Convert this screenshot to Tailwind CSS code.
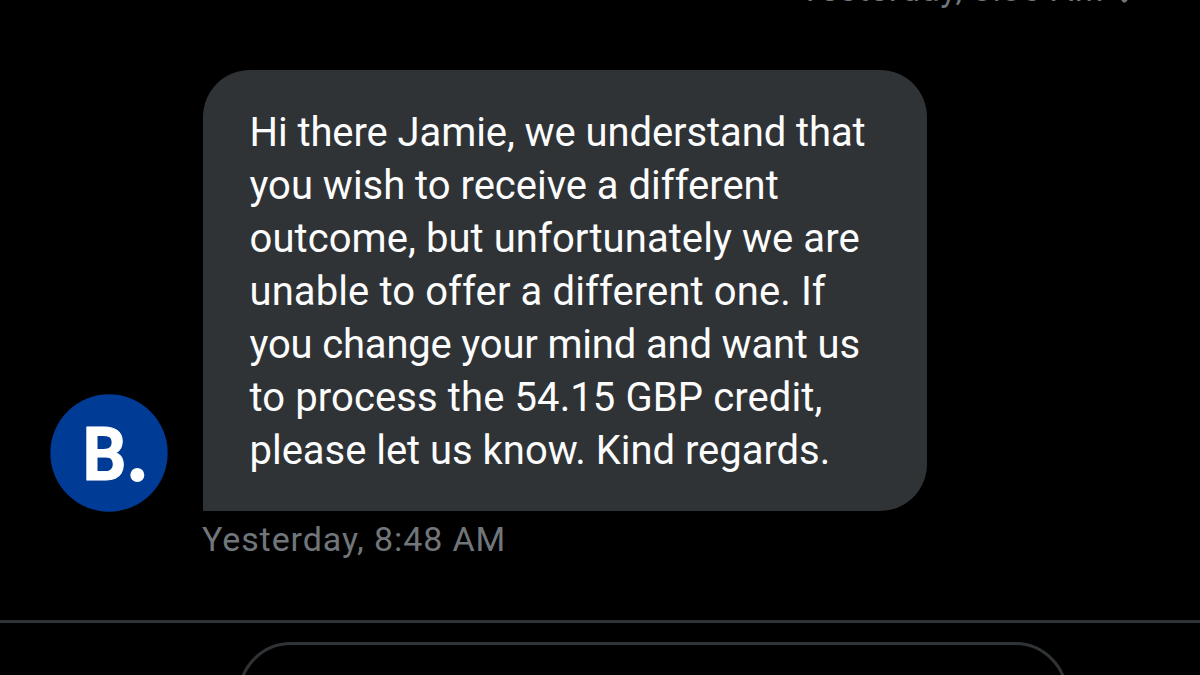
<!DOCTYPE html>
<html lang="en">
  <head>
    <meta charset="UTF-8" />
    <meta name="viewport" content="width=device-width, initial-scale=1.0" />
    <title>Messages</title>
    <script src="https://cdn.jsdelivr.net/npm/@tailwindcss/browser@4"></script>
  </head>

  <body class="bg-black">
    <main
      class="flex h-[675px] w-[1200px] flex-col overflow-hidden bg-black font-['Roboto','Liberation_Sans',sans-serif]"
    >
      <!-- sent message time -->
      <div
        class="-mt-[34px] flex h-[46px] shrink-0 items-center justify-end gap-[10px] pr-[65px] text-[34px] leading-[46px] text-[#71767b]"
      >
        <time class="tracking-[0.95px] whitespace-nowrap">Yesterday, 8:36 AM</time>
        <svg class="h-[30px] w-[20px]" viewBox="0 0 20 30" fill="none">
          <path
            d="M2 18l7.500 8L20 12"
            stroke="currentColor"
            stroke-width="5"
            stroke-linejoin="round"
          />
        </svg>
      </div>

      <!-- received message -->
      <section class="mt-[58px] flex shrink-0 items-end pl-[50px]">
        <svg class="-mb-px h-[118px] w-[118px] shrink-0" viewBox="0 0 118 118">
          <circle cx="59" cy="59" r="58.7" fill="#003b95" />
          <text
            x="35.2"
            y="86.5"
            transform="scale(0.92 1)"
            class="fill-white stroke-white font-['Roboto',sans-serif] text-[75px] font-bold"
            stroke-width="1"
            stroke-linejoin="round"
          >
            B
          </text>
          <circle cx="87.3" cy="81" r="7" fill="#fff" />
        </svg>
        <p
          class="ml-[34.5px] h-[441px] w-[724px] rounded-[47px] rounded-bl-none bg-[#2f3336] px-[47px] pt-[36px] text-[40px] leading-[53px] whitespace-nowrap text-[#fcfcfd]"
        >
          <span class="block tracking-[-0.09px]">Hi there Jamie, we understand that</span>
          <span class="block tracking-[-0.02px]">you wish to receive a different</span>
          <span class="block tracking-[0.07px]">outcome, but unfortunately we are</span>
          <span class="block tracking-[0.1px]">unable to offer a different one. If</span>
          <span class="block tracking-[-0.18px]">you change your mind and want us</span>
          <span class="block tracking-[0.1px]">to process the 54.15 GBP credit,</span>
          <span class="block tracking-[-0.03px]">please let us know. Kind regards.</span>
        </p>
      </section>
      <time
        class="mt-[5px] block h-[46px] shrink-0 pl-[202px] text-[34px] leading-[46px] tracking-[0.9px] text-[#71767b]"
        >Yesterday, 8:48 AM</time
      >

      <!-- composer -->
      <footer class="mt-[58px] shrink-0 border-t-[3px] border-[#2f3336] pt-[19px]">
        <div
          class="ml-[238px] h-[107px] w-[830px] rounded-[53px] border-[3px] border-[#2f3336]"
        ></div>
      </footer>
    </main>
  </body>
</html>
